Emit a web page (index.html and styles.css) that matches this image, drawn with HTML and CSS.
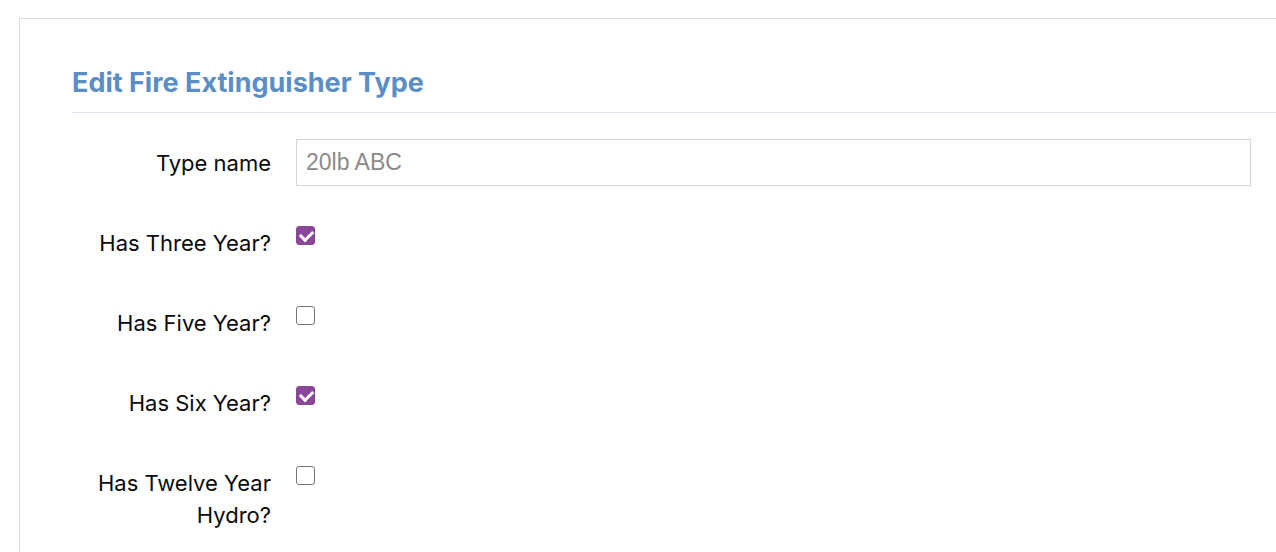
FILE: index.html
```html
<!DOCTYPE html>
<html lang="en">
<head>
    <meta charset="UTF-8">
    <title>Edit Fire Extinguisher Type</title>
    <link rel="stylesheet" href="styles.css">
</head>
<body>
    <div class="card">
        <h2 class="card-title">Edit Fire Extinguisher Type</h2>
        <form class="edit-form">
            <div class="form-row">
                <label for="typeName">Type name</label>
                <input type="text" id="typeName" placeholder="20lb ABC">
            </div>
            <div class="form-row">
                <label for="threeYear">Has Three Year?</label>
                <input type="checkbox" id="threeYear" checked>
            </div>
            <div class="form-row">
                <label for="fiveYear">Has Five Year?</label>
                <input type="checkbox" id="fiveYear">
            </div>
            <div class="form-row">
                <label for="sixYear">Has Six Year?</label>
                <input type="checkbox" id="sixYear" checked>
            </div>
            <div class="form-row">
                <label for="twelveYear">Has Twelve Year Hydro?</label>
                <input type="checkbox" id="twelveYear">
            </div>
        </form>
    </div>
</body>
</html>
```

FILE: styles.css
```css
body {
	font-family: Inter, "Noto Sans", sans-serif;
	background-color: #fff;
	margin: 0;
	padding: 18px 0 0 19px;
	overflow: hidden;
}

.card {
	border: 1px solid #dcdcdc;
	border-right: none;
	border-bottom: none;
	padding: 48px 25px 0 52px;
	height: 600px;
	box-sizing: border-box;
}

.card-title {
	margin: 0 -100px 0 0;
	padding-bottom: 13px;
	border-bottom: 1px solid #dae4ef;
	font-size: 27px;
	font-weight: 700;
	color: #5a8ec6;
	line-height: 32px;
}

.edit-form {
	margin-top: 26px;
}

.form-row {
	display: flex;
	align-items: flex-start;
	min-height: 47px;
	margin-bottom: 33px;
}

.form-row label {
	flex-shrink: 0;
	width: 224px;
	padding: 8px 25px 0 25px;
	box-sizing: border-box;
	text-align: right;
	font-size: 22px;
	line-height: 32px;
	color: #0a0a0a;
}

.form-row input[type="text"] {
	flex: 1;
	height: 47px;
	box-sizing: border-box;
	border: 1px solid #d4d4d4;
	padding: 0 9px;
	font-family: "Liberation Sans", Arial, sans-serif;
	font-size: 23px;
	color: #333;
	outline: none;
}

.form-row input[type="text"]::placeholder {
	color: #8a8a8a;
}

.form-row input[type="checkbox"] {
	appearance: none;
	width: 19px;
	height: 19px;
	margin: 7px 0 0 0;
	border: 1.5px solid #767676;
	border-radius: 3px;
	background: #fff;
	box-sizing: border-box;
	position: relative;
}

.form-row input[type="checkbox"]:checked {
	background: #8b4797;
	border-color: #8b4797;
}

.form-row input[type="checkbox"]:checked::after {
	content: "";
	position: absolute;
	left: 5px;
	top: 1px;
	width: 6px;
	height: 10px;
	border: solid #fff;
	border-width: 0 3px 3px 0;
	transform: rotate(45deg);
}
```
